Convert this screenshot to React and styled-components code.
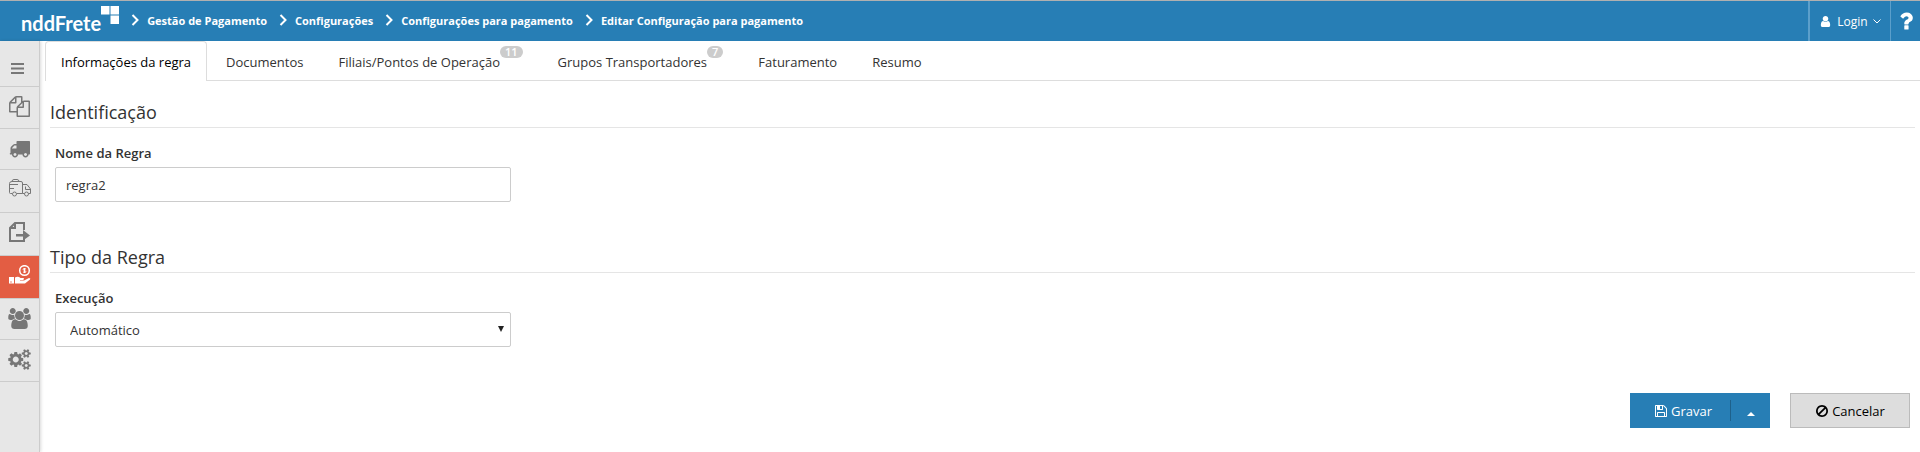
import React, { useState } from "react";

import styled, { createGlobalStyle } from "styled-components";

const paths = {
  files:
    "M1696 384q40 0 68 28t28 68v1216q0 40-28 68t-68 28h-960q-40 0-68-28t-28-68v-288h-544q-40 0-68-28t-28-68v-672q0-40 20-88t48-76l408-408q28-28 76-48t88-20h416q40 0 68 28t28 68v328q68-40 128-40h416zm-544 213l-299 299h299v-299zm-640-384l-299 299h299v-299zm196 647l316-316v-416h-384v416q0 40-28 68t-68 28h-416v640h512v-256q0-40 20-88t48-76zm956 804v-1152h-384v416q0 40-28 68t-68 28h-416v640h896z",
  truck:
    "M640 1408q0-52-38-90t-90-38-90 38-38 90 38 90 90 38 90-38 38-90zm-384-512h384v-256h-158q-13 0-22 9l-195 195q-9 9-9 22v30zm1280 512q0-52-38-90t-90-38-90 38-38 90 38 90 90 38 90-38 38-90zm256-1088v1024q0 15-4 26.5t-13.5 18.5-16.5 11.5-23.5 6-22.5 2-25.5 0-22.5-.5q0 106-75 181t-181 75-181-75-75-181h-384q0 106-75 181t-181 75-181-75-75-181h-64q-3 0-22.5.5t-25.5 0-22.5-2-23.5-6-16.5-11.5-13.5-18.5-4-26.5q0-26 19-45t45-19v-320q0-8-.5-35t0-38 2.5-34.5 6.5-37 14-30.5 22.5-30l198-198q19-19 50.5-32t58.5-13h160v-192q0-26 19-45t45-19h1024q26 0 45 19t19 45z",
  users:
    "M593 896q-162 5-265 128h-134q-82 0-138-40.5t-56-118.5q0-353 124-353 6 0 43.5 21t97.5 42.5 119 21.5q67 0 133-23-5 37-5 66 0 139 81 256zm1071 637q0 120-73 189.5t-194 69.5h-874q-121 0-194-69.5t-73-189.5q0-53 3.5-103.5t14-109 26.5-108.5 43-97.5 62-81 85.5-53.5 111.5-20q10 0 43 21.5t73 48 107 48 135 21.5 135-21.5 107-48 73-48 43-21.5q61 0 111.5 20t85.5 53.5 62 81 43 97.5 26.5 108.5 14 109 3.5 103.5zm-1024-1277q0 106-75 181t-181 75-181-75-75-181 75-181 181-75 181 75 75 181zm704 384q0 159-112.5 271.5t-271.5 112.5-271.5-112.5-112.5-271.5 112.5-271.5 271.5-112.5 271.5 112.5 112.5 271.5zm576 225q0 78-56 118.5t-138 40.5h-134q-103-123-265-128 81-117 81-256 0-29-5-66 66 23 133 23 59 0 119-21.5t97.5-42.5 43.5-21q124 0 124 353zm-128-609q0 106-75 181t-181 75-181-75-75-181 75-181 181-75 181 75 75 181z",
  cogs:
    "M896 896q0-106-75-181t-181-75-181 75-75 181 75 181 181 75 181-75 75-181zm768 512q0-52-38-90t-90-38-90 38-38 90q0 53 37.5 90.5t90.5 37.5 90.5-37.5 37.5-90.5zm0-1024q0-52-38-90t-90-38-90 38-38 90q0 53 37.5 90.5t90.5 37.5 90.5-37.5 37.5-90.5zm-384 421v185q0 10-7 19.5t-16 10.5l-155 24q-11 35-32 76 34 48 90 115 7 11 7 20 0 12-7 19-23 30-82.5 89.5t-78.5 59.5q-11 0-21-7l-115-90q-37 19-77 31-11 108-23 155-7 24-30 24h-186q-11 0-20-7.5t-10-17.5l-23-153q-34-10-75-31l-118 89q-7 7-20 7-11 0-21-8-144-133-144-160 0-9 7-19 10-14 41-53t47-61q-23-44-35-82l-152-24q-10-1-17-9.5t-7-19.5v-185q0-10 7-19.5t16-10.5l155-24q11-35 32-76-34-48-90-115-7-11-7-20 0-12 7-20 22-30 82-89t79-59q11 0 21 7l115 90q34-18 77-32 11-108 23-154 7-24 30-24h186q11 0 20 7.5t10 17.5l23 153q34 10 75 31l118-89q8-7 20-7 11 0 21 8 144 133 144 160 0 8-7 19-12 16-42 54t-45 60q23 48 34 82l152 23q10 2 17 10.5t7 19.5zm640 533v140q0 16-149 31-12 27-30 52 51 113 51 138 0 4-4 7-122 71-124 71-8 0-46-47t-52-68q-20 2-30 2t-30-2q-14 21-52 68t-46 47q-2 0-124-71-4-3-4-7 0-25 51-138-18-25-30-52-149-15-149-31v-140q0-16 149-31 13-29 30-52-51-113-51-138 0-4 4-7 4-2 35-20t59-34 30-16q8 0 46 46.5t52 67.5q20-2 30-2t30 2q51-71 92-112l6-2q4 0 124 70 4 3 4 7 0 25-51 138 17 23 30 52 149 15 149 31zm0-1024v140q0 16-149 31-12 27-30 52 51 113 51 138 0 4-4 7-122 71-124 71-8 0-46-47t-52-68q-20 2-30 2t-30-2q-14 21-52 68t-46 47q-2 0-124-71-4-3-4-7 0-25 51-138-18-25-30-52-149-15-149-31v-140q0-16 149-31 13-29 30-52-51-113-51-138 0-4 4-7 4-2 35-20t59-34 30-16q8 0 46 46.5t52 67.5q20-2 30-2t30 2q51-71 92-112l6-2q4 0 124 70 4 3 4 7 0 25-51 138 17 23 30 52 149 15 149 31z",
  user:
    "M1536 1399q0 109-62.5 187t-150.5 78h-854q-88 0-150.5-78t-62.5-187q0-85 8.5-160.5t31.5-152 58.5-131 94-89 134.5-34.5q131 128 313 128t313-128q76 0 134.5 34.5t94 89 58.5 131 31.5 152 8.5 160.5zm-256-887q0 159-112.5 271.5t-271.5 112.5-271.5-112.5-112.5-271.5 112.5-271.5 271.5-112.5 271.5 112.5 112.5 271.5z",
  question:
    "M1088 1256v240q0 16-12 28t-28 12h-240q-16 0-28-12t-12-28v-240q0-16 12-28t28-12h240q16 0 28 12t12 28zm316-600q0 54-15.5 101t-35 76.5-55 59.5-57.5 43.5-61 35.5q-41 23-68.5 65t-27.5 67q0 17-12 32.5t-28 15.5h-240q-15 0-25.5-18.5t-10.5-37.5v-45q0-83 65-156.5t143-108.5q59-27 84-56t25-76q0-42-46.5-74t-107.5-32q-65 0-108 29-35 25-107 115-13 16-31 16-12 0-25-8l-164-125q-13-10-15.5-25t5.5-28q160-266 464-266 80 0 161 31t146 83 106 127.5 41 158.5z",
  save:
    "M512 1536h768v-384h-768v384zm896 0h128v-896q0-14-10-38.5t-20-34.5l-281-281q-10-10-34-20t-39-10v416q0 40-28 68t-68 28h-576q-40 0-68-28t-28-68v-416h-128v1280h128v-416q0-40 28-68t68-28h832q40 0 68 28t28 68v416zm-384-928v-320q0-13-9.5-22.5t-22.5-9.5h-192q-13 0-22.5 9.5t-9.5 22.5v320q0 13 9.5 22.5t22.5 9.5h192q13 0 22.5-9.5t9.5-22.5zm640 32v928q0 40-28 68t-68 28h-1344q-40 0-68-28t-28-68v-1344q0-40 28-68t68-28h928q40 0 88 20t76 48l280 280q28 28 48 76t20 88z",
  ban:
    "M1440 893q0-161-87-295l-754 753q137 89 297 89 111 0 211.5-43.5t173.5-116.5 116-174.5 43-212.5zm-999 299l755-754q-135-91-300-91-148 0-273 73t-198 199-73 274q0 162 89 299zm1223-299q0 157-61 300t-163.5 246-245 164-298.5 61-298.5-61-245-164-163.5-246-61-300 61-299.5 163.5-245.5 245-164 298.5-61 298.5 61 245 164 163.5 245.5 61 299.5z",
};

const Glyph = ({ name, size, width = 1792 }) => (
  <svg
    width={Math.round((size * width) / 1792)}
    height={size}
    viewBox={`0 0 ${width} 1792`}
    fill="currentColor"
    aria-hidden="true"
  >
    <path d={paths[name]} />
  </svg>
);

const BarsIcon = () => (
  <svg width="13" height="11" viewBox="0 0 13 11" fill="currentColor" aria-hidden="true">
    <path d="M0 0h13v2H0zM0 4.500h13v2H0zM0 9h13v2H0z" />
  </svg>
);

const VanIcon = () => (
  <svg width="22" height="18" viewBox="0 0 22 18" fill="none" stroke="currentColor" aria-hidden="true">
    <path d="M3 2.500h9q1.500 0 1.500 1.500v10.500H8M3 14.500H1.500Q.5 14.500.5 13.500V4.500q0-2 2.500-2M3 2.500Q3 .5 5 .5h3q2 0 2 2M1 5.500h8M1 9.500h4" />
    <path d="M13.500 5.500h4.500l3.500 4.500v4.500h-2M15.500 14.500h-2M16.500 7.500v3h5" />
    <circle cx="5.500" cy="15" r="2" />
    <circle cx="17.500" cy="15" r="2" />
  </svg>
);

const ExportIcon = () => (
  <svg width="22" height="20" viewBox="0 0 22 20" fill="none" stroke="currentColor" strokeWidth="2" aria-hidden="true">
    <path d="M15 8V1H6L1 6v13h14v-2M6 1v5H1" />
    <path d="M7 12h7V8l7 5.500-7 5v-4H7z" fill="currentColor" stroke="none" />
  </svg>
);

const PaymentIcon = () => (
  <svg width="22" height="21" viewBox="0 2 22 21" fill="none" stroke="currentColor" aria-hidden="true">
    <circle cx="15.500" cy="7.500" r="4.800" strokeWidth="1.500" />
    <path d="M17 6q-3-1-3 .3 0 .8 1.500 1.200T17 8.700q0 1.300-3 .3M15.500 5v5" />
    <path
      d="M0 14h5v6.500H0zM6 14.500q3-1.500 5.500.5h3q1.500 1-.5 2h-3v.5h4l5-2.500q2 0 1 1.500l-5 4H6z"
      fill="currentColor"
      stroke="none"
    />
    <circle cx="2" cy="19" r=".7" fill="#e35d43" stroke="none" />
  </svg>
);

const ChevronIcon = () => (
  <svg width="8" height="12" viewBox="0 0 8 12" fill="none" stroke="currentColor" strokeWidth="2" aria-hidden="true">
    <path d="M1.500 1l5 5-5 5" />
  </svg>
);

const LogoSquares = () => (
  <svg width="18" height="18" viewBox="0 0 18 18" fill="#fff" aria-hidden="true">
    <path d="M0 0h8.500v8.500H0zM9.500 0H18v8.500H9.500zM9.500 9.500H18V18H9.500z" />
  </svg>
);

const breadcrumbs = [
  "Gestão de Pagamento",
  "Configurações",
  "Configurações para pagamento",
  "Editar Configuração para pagamento",
];

const menu = [
  { label: "Documentos", icon: <Glyph name="files" size={21} />, height: 42 },
  { label: "Transporte", icon: <Glyph name="truck" size={21} />, height: 41 },
  { label: "Frota", icon: <VanIcon />, height: 43 },
  { label: "Exportação", icon: <ExportIcon />, height: 43 },
  { label: "Pagamento", icon: <PaymentIcon />, height: 43, active: true },
  { label: "Usuários", icon: <Glyph name="users" size={21} width={1920} />, height: 41 },
  { label: "Configurações", icon: <Glyph name="cogs" size={21} width={1920} />, height: 42 },
];

const tabs = [
  { label: "Informações da regra" },
  { label: "Documentos" },
  { label: "Filiais/Pontos de Operação", count: 11 },
  { label: "Grupos Transportadores", count: 7 },
  { label: "Faturamento" },
  { label: "Resumo" },
];

const App = () => {
  const [current, setCurrent] = useState(0);
  const [name, setName] = useState("regra2");

  return (
    <Page>
      <GlobalStyle />
      <Header>
        <Logo href="#">
          <span>nddFrete</span>
          <LogoSquares />
        </Logo>
        <Breadcrumbs>
          {breadcrumbs.map((crumb) => (
            <Crumb key={crumb} href="#">
              <ChevronIcon />
              {crumb}
            </Crumb>
          ))}
        </Breadcrumbs>
        <LoginButton>
          <Glyph name="user" size={13} />
          Login
          <svg width="8" height="5" viewBox="0 0 8 5" fill="none" stroke="currentColor" aria-hidden="true">
            <path d="M.5.5L4 4 7.500.5" />
          </svg>
        </LoginButton>
        <HelpButton aria-label="Ajuda">
          <Glyph name="question" size={24} />
        </HelpButton>
      </Header>
      <Body>
        <Sidebar>
          <MenuToggle aria-label="Menu">
            <BarsIcon />
          </MenuToggle>
          {menu.map((item) => (
            <MenuItem
              key={item.label}
              href="#"
              aria-label={item.label}
              $height={item.height}
              $active={item.active}
            >
              {item.icon}
            </MenuItem>
          ))}
        </Sidebar>
        <Main>
          <Tabs role="tablist">
            {tabs.map((tab, i) => (
              <Tab
                key={tab.label}
                role="tab"
                aria-selected={i === current}
                $active={i === current}
                onClick={() => setCurrent(i)}
              >
                {tab.label}
                {tab.count && <Badge>{tab.count}</Badge>}
              </Tab>
            ))}
          </Tabs>
          <Form onSubmit={(e) => e.preventDefault()}>
            <Section>
              <Title>Identificação</Title>
              <Field>
                <Label htmlFor="nome">Nome da Regra</Label>
                <Input id="nome" value={name} onChange={(e) => setName(e.target.value)} />
              </Field>
            </Section>
            <Section>
              <Title>Tipo da Regra</Title>
              <Field>
                <Label htmlFor="execucao">Execução</Label>
                <SelectBox>
                  <Select id="execucao">
                    <option>Automático</option>
                  </Select>
                </SelectBox>
              </Field>
            </Section>
            <Actions>
              <SaveGroup>
                <SaveButton type="submit">
                  <Glyph name="save" size={14} />
                  Gravar
                </SaveButton>
                <SaveToggle type="button" aria-label="Mais opções">
                  <svg width="8" height="4" viewBox="0 0 8 4" fill="currentColor" aria-hidden="true">
                    <path d="M0 4l4-4 4 4z" />
                  </svg>
                </SaveToggle>
              </SaveGroup>
              <CancelButton type="button">
                <Glyph name="ban" size={14} />
                Cancelar
              </CancelButton>
            </Actions>
          </Form>
        </Main>
      </Body>
    </Page>
  );
};

const GlobalStyle = createGlobalStyle`
  * {
    box-sizing: border-box;
  }
  body {
    margin: 0;
    background: #fff;
    color: #333;
    font-family: "Open Sans", "Noto Sans", sans-serif;
    font-size: 13px;
  }
  button, input, select {
    font: inherit;
    color: inherit;
  }
  svg {
    flex: none;
  }
`;

const Page = styled.div`
  display: flex;
  flex-direction: column;
  min-height: 100vh;
`;
const Header = styled.header`
  display: flex;
  height: 41px;
  border-top: 1px solid #b0b0b0;
  background: #277eb5;
  color: #fff;
`;
const Logo = styled.a`
  display: flex;
  padding: 5px 12px 0 21px;
  color: inherit;
  text-decoration: none;
  span {
    font-family: Lato, sans-serif;
    font-size: 20px;
    font-weight: bold;
    line-height: 34px;
  }
`;
const Breadcrumbs = styled.nav`
  display: flex;
  flex: 1;
  gap: 12px;
`;
const Crumb = styled.a`
  display: flex;
  align-items: center;
  gap: 8px;
  height: 38px;
  color: inherit;
  font-size: 11px;
  font-weight: bold;
  text-decoration: none;
  white-space: nowrap;
`;
const HeaderButton = styled.button`
  display: flex;
  align-items: center;
  padding: 0;
  border: 0;
  border-left: 1px solid #5b9fcb;
  background: none;
  cursor: pointer;
`;
const LoginButton = styled(HeaderButton)`
  justify-content: center;
  gap: 5px;
  width: 82px;
  border-left-width: 2px;
  font-size: 12px;
`;
const HelpButton = styled(HeaderButton)`
  justify-content: center;
  width: 30px;
`;
const Body = styled.div`
  display: flex;
  flex: 1;
`;
const Sidebar = styled.nav`
  width: 40px;
  border-right: 1px solid #ccc;
  background: #e7e7e7;
  box-shadow: 1px 0 3px rgba(0, 0, 0, 0.15);
`;
const MenuToggle = styled.button`
  display: flex;
  align-items: flex-end;
  justify-content: center;
  width: 100%;
  height: 46px;
  padding: 0 4px 12px 0;
  border: 0;
  border-bottom: 1px solid #ccc;
  background: none;
  color: #777;
`;
const MenuItem = styled.a`
  display: flex;
  align-items: flex-start;
  justify-content: center;
  height: ${(props) => props.$height}px;
  padding-top: 9px;
  border-bottom: 1px solid #ccc;
  background: ${(props) => (props.$active ? "#e35d43" : "none")};
  color: ${(props) => (props.$active ? "#fff" : "#777")};
`;
const Main = styled.main`
  flex: 1;
  padding-left: 5px;
`;
const Tabs = styled.div`
  display: flex;
  gap: 3px;
  height: 40px;
  border-bottom: 1px solid #ddd;
`;
const Tab = styled.button`
  display: flex;
  align-items: center;
  height: 40px;
  padding: 0 15px;
  border: 1px solid ${(props) => (props.$active ? "#ddd" : "transparent")};
  border-bottom: 0;
  border-radius: 4px 4px 0 0;
  background: ${(props) => (props.$active ? "#fff" : "none")};
  color: ${(props) => (props.$active ? "#000" : "#333")};
  white-space: nowrap;
  cursor: pointer;
`;
const Badge = styled.span`
  align-self: flex-start;
  margin-top: 4px;
  padding: 0 5px;
  border-radius: 6px;
  background: #ccc;
  color: #fff;
  font-size: 11px;
  font-weight: 600;
  line-height: 12px;
`;
const Form = styled.form`
  padding: 16px 5px 0;
`;
const Section = styled.section`
  margin-bottom: 40px;
`;
const Title = styled.h2`
  margin: 0;
  border-bottom: 1px solid #e5e5e5;
  font-size: 18px;
  font-weight: 500;
  line-height: 30px;
`;
const Field = styled.div`
  width: 466px;
  max-width: 100%;
  padding: 15px 5px 0;
`;
const Label = styled.label`
  display: block;
  font-weight: 600;
  line-height: 20px;
  margin-bottom: 4px;
`;
const Input = styled.input`
  display: block;
  width: 100%;
  height: 35px;
  padding: 0 10px;
  border: 1px solid #ccc;
  border-radius: 2px;
  background: #fff;
`;
const SelectBox = styled.div`
  position: relative;
  &::after {
    content: "";
    position: absolute;
    top: 14px;
    right: 7px;
    border: 3px solid transparent;
    border-top: 6px solid #222;
    border-bottom: 0;
    pointer-events: none;
  }
`;
const Select = styled.select`
  display: block;
  width: 100%;
  height: 35px;
  padding: 0 14px;
  border: 1px solid #ccc;
  border-radius: 2px;
  background: #fff;
  appearance: none;
`;
const Actions = styled.div`
  display: flex;
  justify-content: flex-end;
  gap: 20px;
  padding: 6px 5px 0;
`;
const SaveGroup = styled.div`
  display: flex;
  align-items: center;
  background: #277eb5;
  color: #fff;
`;
const SaveButton = styled.button`
  display: flex;
  align-items: center;
  justify-content: center;
  gap: 3px;
  width: 100px;
  height: 35px;
  border: 0;
  background: none;
  padding-left: 12px;
`;
const SaveToggle = styled.button`
  width: 40px;
  height: 21px;
  padding: 0;
  border: 0;
  border-left: 1px solid #1e618b;
  background: none;
`;
const CancelButton = styled.button`
  display: flex;
  align-items: center;
  justify-content: center;
  gap: 3px;
  width: 120px;
  height: 35px;
  border: 1px solid #bbb;
  background: #ddd;
  color: #000;
`;

export default App;
